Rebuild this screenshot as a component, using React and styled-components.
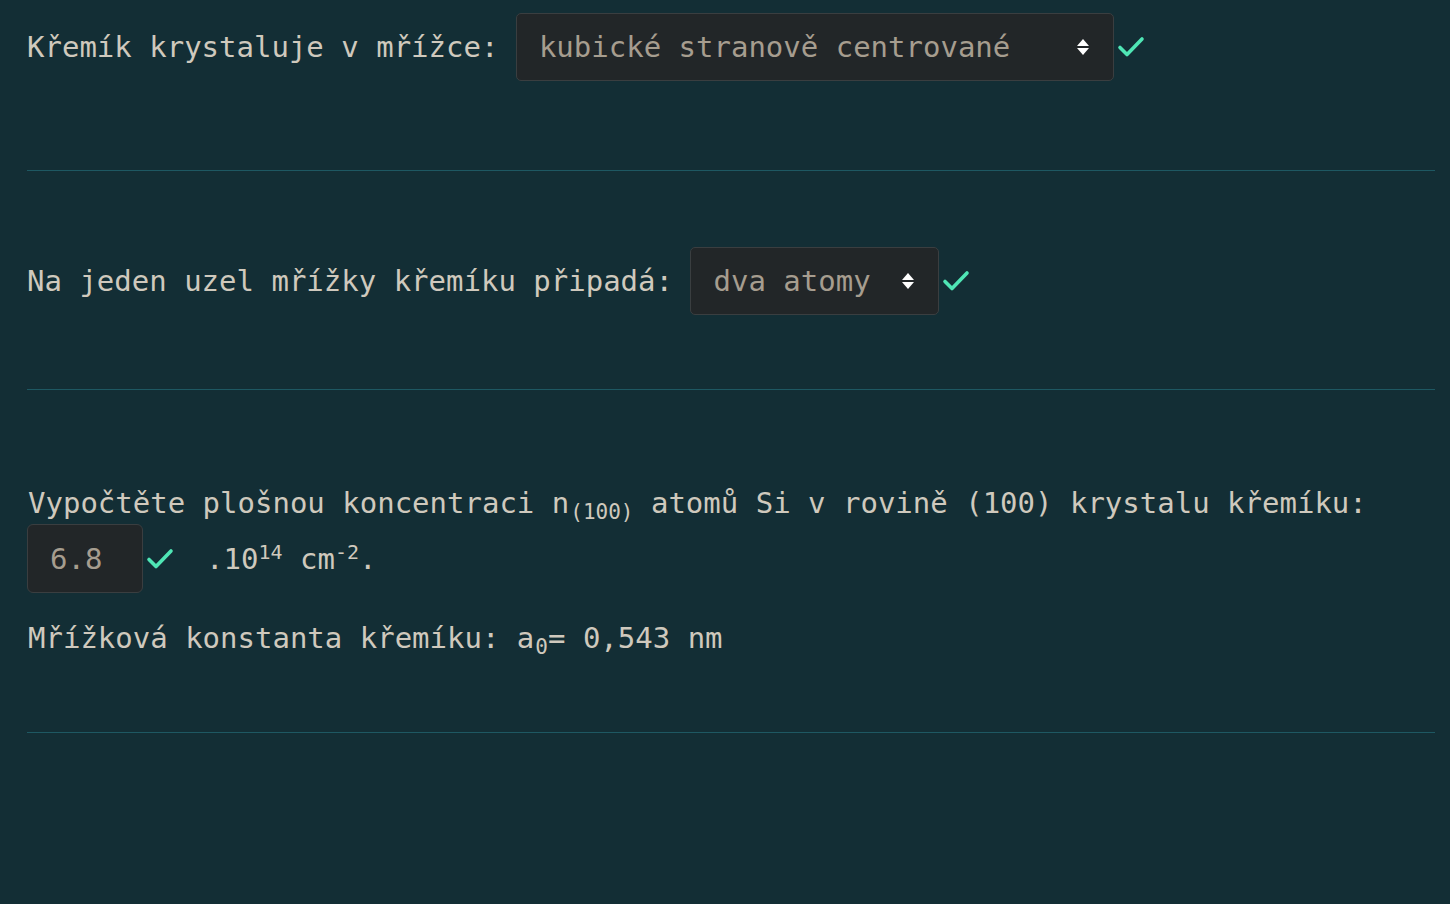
import React from "react";
import styled, { createGlobalStyle } from "styled-components";

const Global = createGlobalStyle`
  html, body { margin: 0; padding: 0; background: #132e35; }
  body { font-family: "DejaVu Sans Mono", "Liberation Mono", monospace; }
`;

const Page = styled.div`
  padding: 13px 15px 0 27px;
  color: #cfc9bd;
  font-size: 29px;
`;

const Section = styled.section`
  padding: ${(p) => p.$pad};
`;

const Rule = styled.hr`
  margin: 0;
  border: 0;
  height: 1px;
  background: #1e5862;
`;

const Row = styled.div`
  display: flex;
  align-items: center;
  white-space: pre;
  margin-top: ${(p) => p.$mt || 0}px;
`;

const Label = styled.span`
  white-space: pre;
`;

const Select = styled.div`
  box-sizing: border-box;
  width: ${(p) => p.$w}px;
  height: 68px;
  display: flex;
  align-items: center;
  justify-content: space-between;
  padding: 0 23px 0 22px;
  background: #222628;
  border: 1px solid #3a3e40;
  border-radius: 5px;
  color: #a69d8f;
`;

const Input = styled.div`
  box-sizing: border-box;
  width: 116px;
  height: 69px;
  display: flex;
  align-items: center;
  padding-left: 22px;
  background: #222628;
  border: 1px solid #3a3e40;
  border-radius: 6px;
  color: #a69d8f;
`;

const Check = styled.svg`
  width: 28px;
  height: 24px;
  margin-left: ${(p) => p.$ml || 3}px;
  flex: none;
`;

const Sub = styled.sub`
  font-size: 21px;
  vertical-align: -6px;
  line-height: 0;
  margin-left: 1px;
`;

const Sup = styled.sup`
  font-size: 20px;
  vertical-align: 10px;
  line-height: 0;
`;

const Unit = styled.span`
  margin-left: 32px;
`;

const Para = styled.div`
  line-height: 40px;
  margin-top: ${(p) => p.$mt || 0}px;
  padding-left: 1px;
`;

const Arrows = () => (
  <svg width="14" height="18" viewBox="0 0 14 18">
    <path d="M7 1 L13 8 L1 8 Z" fill="#ffffff" />
    <path d="M1 10 L13 10 L7 17 Z" fill="#ffffff" />
  </svg>
);

const Tick = ({ ml }) => (
  <Check $ml={ml} viewBox="0 0 28 24">
    <path
      d="M3 12.5 L10 19.5 L25 4"
      fill="none"
      stroke="#4fe6b5"
      strokeWidth="3.6"
      strokeLinecap="round"
      strokeLinejoin="round"
    />
  </Check>
);

export default function App() {
  return (
    <>
      <Global />
      <Page>
        <Section $pad="0 0 89px 0">
          <Row>
            <Label>Křemík krystaluje v mřížce: </Label>
            <Select $w={598}>
              <span>kubické stranově centrované</span>
              <Arrows />
            </Select>
            <Tick ml={3} />
          </Row>
        </Section>
        <Rule />
        <Section $pad="76px 0 74px 0">
          <Row>
            <Label>Na jeden uzel mřížky křemíku připadá: </Label>
            <Select $w={249}>
              <span>dva atomy</span>
              <Arrows />
            </Select>
            <Tick ml={3} />
          </Row>
        </Section>
        <Rule />
        <Section $pad="93px 0 74px 0">
          <Para>
            Vypočtěte plošnou koncentraci n<Sub>(100)</Sub> atomů Si v rovině
            (100) krystalu křemíku:
          </Para>
          <Row $mt={1}>
            <Input>6.8</Input>
            <Tick ml={3} />
            <Unit>
              .10<Sup>14</Sup> cm<Sup>-2</Sup>.
            </Unit>
          </Row>
          <Para $mt={25}>
            Mřížková konstanta křemíku: a<Sub>0</Sub>= 0,543 nm
          </Para>
        </Section>
        <Rule />
      </Page>
    </>
  );
}
